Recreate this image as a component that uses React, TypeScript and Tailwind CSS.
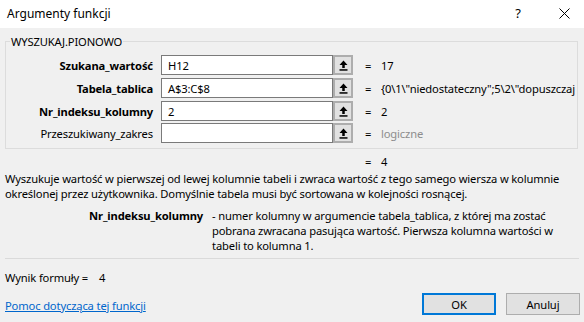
import React from "react";

const font = { fontFamily: '"Noto Sans", "Open Sans", sans-serif' };

function UpArrow() {
  return (
    <svg width="9" height="11" viewBox="0 0 9 11">
      <path d="M4.5 0.5 L8.5 5 L5.75 5 L5.75 8 L3.25 8 L3.25 5 L0.5 5 Z" fill="#000" />
      <rect x="0.5" y="9.2" width="8" height="1.5" fill="#000" />
    </svg>
  );
}

function Row({
  label,
  bold,
  value,
  result,
  gray,
  mt,
}: {
  label: string;
  bold?: boolean;
  value: string;
  result: string;
  gray?: boolean;
  mt: string;
}) {
  return (
    <div className={`flex items-center h-[20px] ${mt}`}>
      <div className={`w-[147px] text-right ${bold ? "font-bold" : ""} whitespace-nowrap`}>{label}</div>
      <div className="ml-[8px] w-[172px] h-[20px] bg-white border border-[#7a7a7a] flex items-center px-[6px] whitespace-nowrap overflow-hidden">
        {value}
      </div>
      <div className="w-[20px] h-[20px] bg-[#e1e1e1] border-2 border-[#adadad] flex items-center justify-center">
        <UpArrow />
      </div>
      <div className="ml-[12px] w-[16px]">=</div>
      <div className={`whitespace-nowrap overflow-hidden w-[194px] ${gray ? "text-[#8d8d8d]" : ""}`}>{result}</div>
    </div>
  );
}

export default function App() {
  return (
    <div
      className="w-[584px] h-[322px] bg-[#f0f0f0] overflow-hidden text-[11.2px] tracking-[-0.15px] text-black leading-[15px]"
      style={font}
    >
      <div className="h-[28px] bg-white flex items-center pl-[7px] tracking-normal">
        <div className="flex-1 text-[12px] pb-[2px]">Argumenty funkcji</div>
        <div className="w-[10px] text-center text-[13px] pb-[2px]">?</div>
        <div className="ml-[36px] mr-[14px] w-[11px] flex items-center justify-center pb-[2px]">
          <svg width="11" height="11" viewBox="0 0 11 11">
            <path d="M0.5 0.5 L10.5 10.5 M10.5 0.5 L0.5 10.5" stroke="#000" strokeWidth="1" />
          </svg>
        </div>
      </div>
      <div className="px-[5px]">
        <div className="relative mt-[13px] h-[108px] mr-[1px] border border-[#dcdcdc] pt-[13px]">
          <div className="absolute left-[4px] top-[-8px] bg-[#f0f0f0] px-[1px]">WYSZUKAJ.PIONOWO</div>
          <Row label="Szukana_wartość" bold value="H12" result="17" mt="mt-[0px]" />
          <Row label="Tabela_tablica" bold value="A$3:C$8" result={'{0\\1\\"niedostateczny";5\\2\\"dopuszczaj'} mt="mt-[3px]" />
          <Row label="Nr_indeksu_kolumny" bold value="2" result="2" mt="mt-[3px]" />
          <Row label="Przeszukiwany_zakres" value="" result="logiczne" gray mt="mt-[2px]" />
        </div>
        <div className="flex mt-[5px] h-[15px]">
          <div className="ml-[360px] w-[16px]">=</div>
          <div>4</div>
        </div>
        <div className="mt-[2px] whitespace-nowrap">
          Wyszukuje wartość w pierwszej od lewej kolumnie tabeli i zwraca wartość z tego samego wiersza w kolumnie
          <br />
          określonej przez użytkownika. Domyślnie tabela musi być sortowana w kolejności rosnącej.
        </div>
        <div className="flex mt-[7px]">
          <div className="w-[198px] text-right font-bold whitespace-nowrap">Nr_indeksu_kolumny</div>
          <div className="ml-[9px] whitespace-nowrap">
            - numer kolumny w argumencie tabela_tablica, z której ma zostać
            <br />
            pobrana zwracana pasująca wartość. Pierwsza kolumna wartości w
            <br />
            tabeli to kolumna 1.
          </div>
        </div>
        <div className="mt-[5px] h-px bg-[#dadada]" />
        <div className="mt-[11px] flex whitespace-nowrap">
          <div className="w-[94px]">Wynik formuły =</div>
          <div>4</div>
        </div>
        <div className="flex items-center mt-[8px]">
          <a className="flex-1 text-[#0066cc] underline pt-[2px]">Pomoc dotycząca tej funkcji</a>
          <div className="w-[74px] h-[22px] border-2 border-[#0078d7] bg-[#e1e1e1] flex items-center justify-center">OK</div>
          <div className="ml-[10px] mr-[-1px] w-[74px] h-[22px] border border-[#adadad] bg-[#e1e1e1] flex items-center justify-center">Anuluj</div>
        </div>
      </div>
    </div>
  );
}
